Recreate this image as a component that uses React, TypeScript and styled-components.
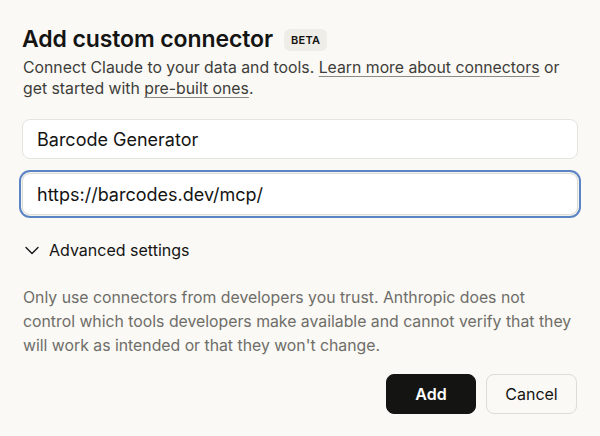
import { useEffect, useRef } from 'react';
import styled, { createGlobalStyle } from 'styled-components';

const GlobalStyle = createGlobalStyle`
  html, body {
    margin: 0;
    padding: 0;
    background: #faf9f5;
  }
  body {
    font-family: Inter, 'Noto Sans', sans-serif;
    color: #141413;
  }
`;

const Dialog = styled.div`
  width: 600px;
  height: 436px;
  box-sizing: border-box;
  padding: 25px 22px 0 22px;
  display: flex;
  flex-direction: column;
`;

const TitleRow = styled.div`
  display: flex;
  align-items: center;
  gap: 11px;
  height: 28px;
`;

const Title = styled.h2`
  margin: 0;
  font-size: 23px;
  font-weight: 600;
  letter-spacing: -0.1px;
  line-height: 28px;
`;

const Badge = styled.span`
  background: #efede7;
  border-radius: 6px;
  padding: 4px 7px;
  font-size: 11px;
  font-weight: 600;
  letter-spacing: 0.3px;
  line-height: 14px;
  margin-top: 2px;
`;

const Description = styled.p`
  margin: 4px 0 0 1px;
  font-size: 15.8px;
  line-height: 21px;
  color: #3d3d3a;
`;

const TextLink = styled.a`
  color: inherit;
  text-decoration: underline;
  text-decoration-color: #8d8b85;
  text-underline-offset: 3px;
`;

const Fields = styled.div`
  display: flex;
  flex-direction: column;
  gap: 14px;
  margin-top: 20px;
`;

const Input = styled.input<{ $focused?: boolean }>`
  height: ${({ $focused }) => ($focused ? '42px' : '40px')};
  box-sizing: border-box;
  width: 100%;
  border: 1px solid ${({ $focused }) => ($focused ? '#dedcd6' : '#e6e4de')};
  border-radius: 8px;
  background: #ffffff;
  padding: 0 14px;
  font-family: Inter, 'Noto Sans', sans-serif;
  font-size: 18px;
  color: #141413;
  outline: none;
  box-shadow: ${({ $focused }) =>
    $focused ? '0 0 0 1px #f4f3ef, 0 0 0 3px #5b84c4' : 'none'};
  caret-color: #141413;
`;

const Toggle = styled.button`
  display: flex;
  align-items: center;
  gap: 10px;
  margin: 23px 0 0 3px;
  padding: 0;
  background: none;
  border: none;
  font-family: Inter, 'Noto Sans', sans-serif;
  font-size: 16px;
  color: #141413;
  height: 24px;
  cursor: pointer;
`;

const Notice = styled.p`
  margin: 24px 0 0 1px;
  font-size: 15.8px;
  line-height: 24px;
  color: #6e6d68;
`;

const Actions = styled.div`
  display: flex;
  justify-content: flex-end;
  gap: 10px;
  margin-top: 16px;
  padding-right: 1px;
`;

const Button = styled.button<{ $primary?: boolean }>`
  height: 40px;
  width: ${({ $primary }) => ($primary ? '90px' : '91px')};
  border-radius: 8px;
  font-family: Inter, 'Noto Sans', sans-serif;
  font-size: 16px;
  font-weight: ${({ $primary }) => ($primary ? 600 : 400)};
  color: ${({ $primary }) => ($primary ? '#ffffff' : '#141413')};
  background: ${({ $primary }) => ($primary ? '#141413' : '#faf9f5')};
  border: 1px solid ${({ $primary }) => ($primary ? '#141413' : '#dedcd6')};
  cursor: pointer;
`;

function Chevron() {
  return (
    <svg width="14" height="9" viewBox="0 0 14 9" fill="none">
      <path d="M1 1.5L7 7.5L13 1.5" stroke="#141413" strokeWidth="1.4" strokeLinecap="round" strokeLinejoin="round" />
    </svg>
  );
}

export default function App() {
  const urlRef = useRef<HTMLInputElement>(null);

  useEffect(() => {
    const el = urlRef.current;
    if (el) {
      el.focus();
      el.setSelectionRange(el.value.length, el.value.length);
    }
  }, []);

  return (
    <>
      <GlobalStyle />
      <Dialog>
        <TitleRow>
          <Title>Add custom connector</Title>
          <Badge>BETA</Badge>
        </TitleRow>
        <Description>
          Connect Claude to your data and tools. <TextLink href="#">Learn more about connectors</TextLink> or
          get started with <TextLink href="#">pre-built ones</TextLink>.
        </Description>
        <Fields>
          <Input defaultValue="Barcode Generator" />
          <Input $focused ref={urlRef} defaultValue="https://barcodes.dev/mcp/" />
        </Fields>
        <Toggle>
          <Chevron />
          Advanced settings
        </Toggle>
        <Notice>
          Only use connectors from developers you trust. Anthropic does not control which tools developers make
          available and cannot verify that they will work as intended or that they won&apos;t change.
        </Notice>
        <Actions>
          <Button $primary>Add</Button>
          <Button>Cancel</Button>
        </Actions>
      </Dialog>
    </>
  );
}
